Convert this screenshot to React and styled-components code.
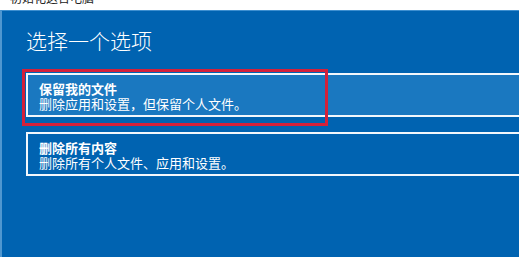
import React from 'react';
import styled, { createGlobalStyle } from 'styled-components';

const GlobalStyle = createGlobalStyle`
  html, body {
    margin: 0;
    padding: 0;
    background: #0063b1;
  }
  body {
    font-family: "Noto Sans CJK SC", "Noto Sans", sans-serif;
  }
`;

const Window = styled.div`
  width: 519px;
  height: 257px;
  overflow: hidden;
  display: flex;
  flex-direction: column;
`;

const TitleBar = styled.div`
  height: 10px;
  flex-shrink: 0;
  background: #ffffff;
  overflow: hidden;
  padding-left: 10px;
`;

const TitleText = styled.div`
  font-size: 12px;
  line-height: 12px;
  margin-top: -8px;
  color: #222;
  white-space: nowrap;
`;

const Content = styled.main`
  flex: 1;
  background: #0063b1;
  border-top: 1px solid #3d8fd0;
  border-left: 2px solid #4f97d0;
  padding: 15px 0 0 24px;
  color: #ffffff;
`;

const Heading = styled.h1`
  margin: 0 0 19px;
  font-size: 21px;
  line-height: 28px;
  font-weight: 300;
`;

const OptionList = styled.div`
  display: flex;
  flex-direction: column;
  gap: 15px;
`;

const Option = styled.div`
  position: relative;
  width: 540px;
  height: 44px;
  box-sizing: border-box;
  border: 2px solid #f2f7fc;
  background: ${(p) => (p.$active ? '#1a78c0' : '#0063b1')};
  padding: 6px 0 0 11px;
  display: flex;
  flex-direction: column;
`;

const OptionTitle = styled.div`
  font-size: 13px;
  line-height: 15px;
  font-weight: 700;
`;

const OptionDesc = styled.div`
  font-size: 13px;
  line-height: 16px;
  font-weight: 400;
`;

// red annotation frame drawn over the selected option
const Highlight = styled.div`
  position: absolute;
  left: -6px;
  top: -6px;
  width: 306px;
  height: 57px;
  box-sizing: border-box;
  border: 3px solid #d3213a;
  pointer-events: none;
`;

const options = [
  { title: '保留我的文件', desc: '删除应用和设置，但保留个人文件。', active: true },
  { title: '删除所有内容', desc: '删除所有个人文件、应用和设置。', active: false },
];

export default function App() {
  return (
    <Window>
      <GlobalStyle />
      <TitleBar>
        <TitleText>初始化这台电脑</TitleText>
      </TitleBar>
      <Content>
        <Heading>选择一个选项</Heading>
        <OptionList>
          {options.map((o) => (
            <Option key={o.title} $active={o.active}>
              {o.active && <Highlight />}
              <OptionTitle>{o.title}</OptionTitle>
              <OptionDesc>{o.desc}</OptionDesc>
            </Option>
          ))}
        </OptionList>
      </Content>
    </Window>
  );
}
